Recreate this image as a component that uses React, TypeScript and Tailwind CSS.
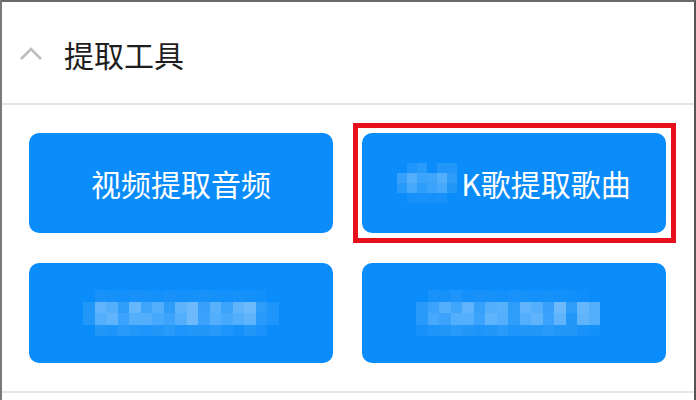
import React from 'react';

// opacity maps for the pixelated (blurred) labels
const mosaicK = [
  [0, 0.08, 0.12, 0, 0.1, 0.1],
  [0.18, 0.3, 0.2, 0.22, 0.3, 0.15],
  [0.12, 0.25, 0.15, 0.2, 0.25, 0.1],
  [0, 0.05, 0.06, 0.05, 0.06, 0],
];

const mosaicA = [
  [0, 0.06, 0.05, 0.04, 0.06, 0.05, 0.04, 0.06, 0.04, 0.05, 0.06, 0.05, 0.04, 0.05, 0.04, 0.03, 0],
  [0.1, 0.35, 0.3, 0.15, 0.38, 0.22, 0.3, 0.15, 0.34, 0.4, 0.18, 0.32, 0.2, 0.35, 0.4, 0.15, 0.08],
  [0.1, 0.3, 0.35, 0.2, 0.3, 0.3, 0.25, 0.2, 0.3, 0.4, 0.2, 0.3, 0.25, 0.3, 0.35, 0.12, 0.08],
  [0, 0.1, 0.08, 0.12, 0.1, 0.08, 0.1, 0.12, 0.08, 0.1, 0.1, 0.12, 0.08, 0.05, 0.1, 0.06, 0],
];

const mosaicB = [
  [0, 0.06, 0.05, 0.08, 0.04, 0.06, 0.05, 0.04, 0.06, 0.05, 0.04, 0.05, 0.04, 0.03, 0.02, 0, 0],
  [0.12, 0.2, 0.3, 0.22, 0.35, 0.18, 0.3, 0.32, 0.15, 0.35, 0.3, 0.18, 0.4, 0.15, 0.38, 0.3, 0],
  [0.12, 0.25, 0.2, 0.3, 0.3, 0.2, 0.35, 0.3, 0.15, 0.3, 0.35, 0.2, 0.35, 0.1, 0.35, 0.3, 0],
  [0.05, 0.08, 0.1, 0.12, 0.1, 0.08, 0.1, 0.12, 0.08, 0.1, 0.1, 0.12, 0.1, 0.1, 0.06, 0.04, 0],
];

function Mosaic({ cells, size }: { cells: number[][]; size: number }) {
  return (
    <div className="flex flex-col">
      {cells.map((row, r) => (
        <div key={r} className="flex">
          {row.map((o, c) => (
            <div
              key={c}
              style={{ width: size, height: size, backgroundColor: `rgba(255,255,255,${o})` }}
            />
          ))}
        </div>
      ))}
    </div>
  );
}

const btn =
  'w-[304px] h-[100px] rounded-[10px] bg-[#0a8cfa] flex items-center justify-center text-white text-[30px] font-normal';

export default function App() {
  return (
    <div
      className="w-[696px] h-[400px] bg-white overflow-hidden border-t-2 border-l-2 border-r-2 border-t-[#6a6a6a] border-l-[#7a7a7a] border-r-[#555] flex flex-col"
      style={{ fontFamily: '"Noto Sans CJK SC", "Noto Sans", sans-serif' }}
    >
      <div className="h-[101px] flex items-center pt-[3px] shrink-0">
        <svg width="24" height="14" viewBox="0 0 24 14" className="ml-[17px]">
          <polyline points="2,12 12,2 22,12" fill="none" stroke="#bdbdbd" strokeWidth="2.6" />
        </svg>
        <span className="ml-[21px] text-[30px] text-[#1e1e1e] leading-none">提取工具</span>
      </div>
      <div className="h-[2px] bg-[#e3e3e3] shrink-0" />

      <div className="pl-[27px] pt-[28px] grid grid-cols-[304px_304px] gap-x-[29px] gap-y-[30px]">
        <div className={btn}>视频提取音频</div>
        <div className="relative">
          <div className={btn}>
            <div className="flex items-center">
              <Mosaic cells={mosaicK} size={10} />
              <span className="ml-[4px]">K歌提取歌曲</span>
            </div>
          </div>
          {/* highlight frame */}
          <div className="absolute -left-[9px] -top-[10px] -right-[10px] -bottom-[10px] border-[5px] border-[#e8101c]" />
        </div>
        <div className={btn}>
          <Mosaic cells={mosaicA} size={11.5} />
        </div>
        <div className={btn}>
          <Mosaic cells={mosaicB} size={11.5} />
        </div>
      </div>

      <div className="mt-[28px] h-[2px] bg-[#e6e6e6] shrink-0" />
    </div>
  );
}
